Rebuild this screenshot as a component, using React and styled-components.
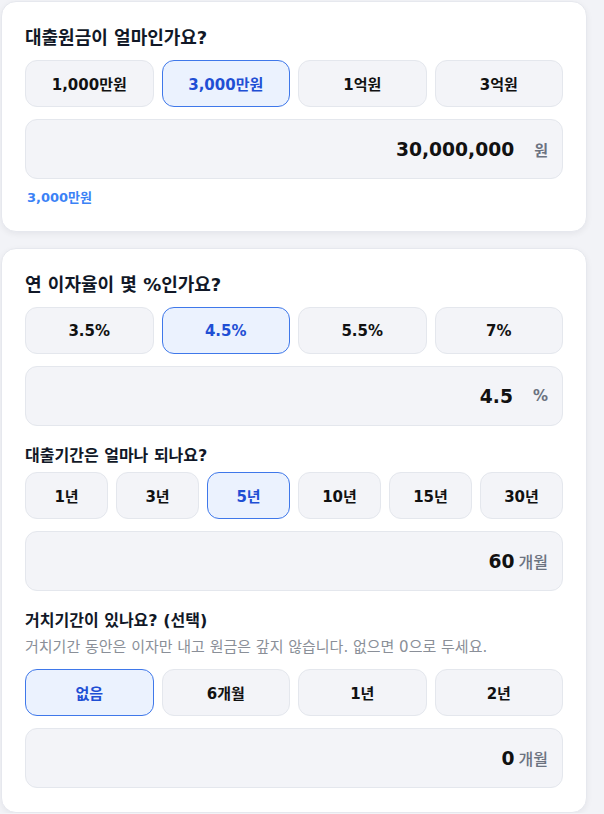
import React from "react";
import styled, { createGlobalStyle } from "styled-components";

const Global = createGlobalStyle`
  html, body { margin: 0; padding: 0; background: #f2f3f7; }
  body { font-family: "DejaVu Sans", "Noto Sans CJK KR", sans-serif; color: #111827; }
  * { box-sizing: border-box; }
`;

const Page = styled.div`
  display: flex;
  flex-direction: column;
  gap: 16px;
  padding: 1px 17px 0 1px;
`;

const Card = styled.section`
  background: #fff;
  border: 1px solid #e6e8ee;
  border-radius: 15px;
  box-shadow: 0 2px 6px rgba(17, 24, 39, 0.06);
  padding: 23px 23px 24px;
`;

const Group = styled.div`
  & + & { margin-top: 19px; }
`;

const Title = styled.h2`
  margin: 0 0 10px;
  font-size: ${(p) => (p.$small ? "16px" : "18px")};
  line-height: ${(p) => (p.$small ? "22px" : "25px")};
  font-weight: 700;
  color: #111827;
  ${(p) => p.$small && "margin-bottom: 5px;"}
`;

const Sub = styled.p`
  margin: 0 0 12px;
  font-size: 15px;
  line-height: 20px;
  color: #8a8f98;
`;

const Options = styled.div`
  display: grid;
  grid-template-columns: repeat(${(p) => p.$cols}, 1fr);
  gap: 8px;
`;

const Option = styled.button`
  height: 47px;
  border-radius: 12px;
  border: 1px solid ${(p) => (p.$active ? "#3f78ea" : "#e4e7ed")};
  background: ${(p) => (p.$active ? "#ebf2fe" : "#f3f4f8")};
  color: ${(p) => (p.$active ? "#1f4fd4" : "#111111")};
  font-family: inherit;
  font-size: 15px;
  font-weight: 700;
  cursor: pointer;
  padding: 0;
`;

const InputBox = styled.div`
  margin-top: 12px;
  height: 60px;
  border-radius: 12px;
  border: 1px solid #e4e7ed;
  background: #f3f4f8;
  display: flex;
  align-items: center;
  justify-content: flex-end;
  padding: 0 14px 0 16px;
  gap: ${(p) => (p.$tight ? "4px" : "20px")};
`;

const Value = styled.span`
  font-size: 18.7px;
  font-weight: 700;
  color: #111111;
`;

const Unit = styled.span`
  font-size: ${(p) => (p.$tight ? "16px" : "15px")};
  font-weight: ${(p) => (p.$tight ? 500 : 600)};
  color: #6b7280;
`;

const Helper = styled.div`
  margin-top: 10px;
  padding-left: 2px;
  font-size: 13px;
  line-height: 18px;
  font-weight: 700;
  color: #3b82f6;
`;

function Field({ title, small, sub, options, active, value, unit, tight, helper }) {
  return (
    <Group>
      <Title $small={small}>{title}</Title>
      {sub && <Sub>{sub}</Sub>}
      <Options $cols={options.length}>
        {options.map((o) => (
          <Option key={o} $active={o === active}>{o}</Option>
        ))}
      </Options>
      <InputBox $tight={tight}>
        <Value>{value}</Value>
        <Unit $tight={tight}>{unit}</Unit>
      </InputBox>
      {helper && <Helper>{helper}</Helper>}
    </Group>
  );
}

export default function App() {
  return (
    <>
      <Global />
      <Page>
        <Card>
          <Field
            title="대출원금이 얼마인가요?"
            options={["1,000만원", "3,000만원", "1억원", "3억원"]}
            active="3,000만원"
            value="30,000,000"
            unit="원"
            helper="3,000만원"
          />
        </Card>
        <Card>
          <Field
            title="연 이자율이 몇 %인가요?"
            options={["3.5%", "4.5%", "5.5%", "7%"]}
            active="4.5%"
            value="4.5"
            unit="%"
          />
          <Field
            small
            title="대출기간은 얼마나 되나요?"
            options={["1년", "3년", "5년", "10년", "15년", "30년"]}
            active="5년"
            value="60"
            unit="개월"
            tight
          />
          <Field
            small
            title="거치기간이 있나요? (선택)"
            sub="거치기간 동안은 이자만 내고 원금은 갚지 않습니다. 없으면 0으로 두세요."
            options={["없음", "6개월", "1년", "2년"]}
            active="없음"
            value="0"
            unit="개월"
            tight
          />
        </Card>
      </Page>
    </>
  );
}
